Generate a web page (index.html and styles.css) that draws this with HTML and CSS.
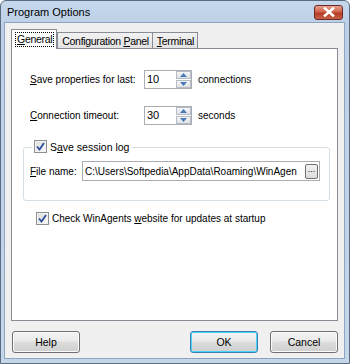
FILE: index.html
```html
<!DOCTYPE html>
<html>
<head>
<meta charset="utf-8">
<link rel="stylesheet" href="styles.css">
</head>
<body>
<div class="window">
  <div class="titlebar">
    <span class="title">Program Options</span>
    <span class="close"><svg width="14" height="10" viewBox="0 0 14 10"><path d="M3 1.5 L11 8.5 M11 1.5 L3 8.5" stroke="#fff" stroke-width="2.6" stroke-linecap="square"/><path d="M3 1.5 L11 8.5 M11 1.5 L3 8.5" stroke="#fff" stroke-width="1.6"/></svg></span>
  </div>
  <div class="client">
    <div class="tabs">
      <div class="tab active"><span class="focus"><u>G</u>eneral</span></div>
      <div class="tab">Configuration <u>P</u>anel</div>
      <div class="tab"><u>T</u>erminal</div>
    </div>
    <div class="panel">
      <div class="row r1">
        <span class="lbl"><u>S</u>ave properties for last:</span>
        <span class="spin"><span class="val">10</span><span class="arrows"><span class="ab"><svg width="7" height="4" viewBox="0 0 7 4"><path d="M0 4 L3.5 0 L7 4Z" fill="#4a7ab8"/></svg></span><span class="ab"><svg width="7" height="4" viewBox="0 0 7 4"><path d="M0 0 L3.5 4 L7 0Z" fill="#4a7ab8"/></svg></span></span></span>
        <span class="unit">connections</span>
      </div>
      <div class="row r2">
        <span class="lbl"><u>C</u>onnection timeout:</span>
        <span class="spin"><span class="val">30</span><span class="arrows"><span class="ab"><svg width="7" height="4" viewBox="0 0 7 4"><path d="M0 4 L3.5 0 L7 4Z" fill="#4a7ab8"/></svg></span><span class="ab"><svg width="7" height="4" viewBox="0 0 7 4"><path d="M0 0 L3.5 4 L7 0Z" fill="#4a7ab8"/></svg></span></span></span>
        <span class="unit">seconds</span>
      </div>
      <div class="group">
        <div class="legend">
          <span class="cb"><svg width="9" height="9" viewBox="0 0 9 9"><path d="M1 4.5 L3.5 7.5 L8 1" fill="none" stroke="#2c4d9e" stroke-width="1.8"/></svg></span>
          <span>S<u>a</u>ve session log</span>
        </div>
        <div class="filerow">
          <span class="lbl2"><u>F</u>ile name:</span>
          <span class="file"><span class="path">C:\Users\Softpedia\AppData\Roaming\WinAgen</span><span class="browse">...</span></span>
        </div>
      </div>
      <div class="check2">
        <span class="cb"><svg width="9" height="9" viewBox="0 0 9 9"><path d="M1 4.5 L3.5 7.5 L8 1" fill="none" stroke="#2c4d9e" stroke-width="1.8"/></svg></span>
        <span>Check WinAgents <u>w</u>ebsite for updates at startup</span>
      </div>
    </div>
    <div class="buttons">
      <button class="btn">Help</button>
      <span class="spacer"></span>
      <button class="btn ok">OK</button>
      <button class="btn">Cancel</button>
    </div>
  </div>
</div>
</body>
</html>
```
FILE: styles.css
```css
html, body {
  margin: 0;
  padding: 0;
  background: #fff;
}
body {
  font-family: "Liberation Sans", Arial, sans-serif;
  font-size: 10px;
  color: #000;
}
.window {
  width: 350px;
  height: 364px;
  box-sizing: border-box;
  border: 1px solid #5b6b80;
  border-radius: 6px 6px 0 0;
  background: linear-gradient(#c5d7eb, #bcd0e7 25px, #c4d6ea);
  display: flex;
  flex-direction: column;
  padding: 0 4px 4px 3px;
}
.titlebar {
  height: 21px;
  display: flex;
  align-items: center;
  justify-content: space-between;
  flex: none;
}
.title {
  font-size: 11px;
  padding-left: 3px;
  padding-top: 1px;
  color: #000;
}
.close {
  width: 29px;
  height: 15px;
  box-sizing: border-box;
  border: 1px solid #6d2a24;
  border-radius: 3px;
  background: linear-gradient(#e6a18c, #d0624a 45%, #b53c25 55%, #c8604a);
  display: flex;
  align-items: center;
  justify-content: center;
  margin-right: 2px;
  margin-top: 1px;
}
.client {
  flex: 1;
  background: #f0f0f0;
  border: 1px solid #8ea4bf;
  padding: 6px 6px 0 6px;
  display: flex;
  flex-direction: column;
}
.tabs {
  display: flex;
  align-items: flex-end;
  height: 19px;
  position: relative;
  z-index: 1;
}
.tab {
  height: 16px;
  box-sizing: border-box;
  border: 1px solid #898c95;
  border-bottom: none;
  background: linear-gradient(#f2f2f2, #e3e3e3);
  padding: 2px 3px 0 4px;
  margin-right: -1px;
  white-space: nowrap;
  font-size: 10.5px;
  letter-spacing: -0.3px;
}
.tab.active {
  background: #fff;
  padding: 2px 2px 0 3px;
  margin-right: 0;
  margin-bottom: -1px;
  height: 20px;
}
.focus {
  border: 1px dotted #000;
  padding: 0 1px;
  display: inline-block;
  line-height: 13px;
}
.panel {
  height: 273px;
  box-sizing: border-box;
  border: 1px solid #898c95;
  background: #fff;
  padding: 21px 0 0 18px;
}
.row {
  display: flex;
  align-items: center;
  height: 19px;
}
.r2 {
  margin-top: 17px;
}
.lbl {
  width: 114px;
  flex: none;
}
.spin {
  display: flex;
  height: 19px;
  width: 48px;
  box-sizing: border-box;
  border: 1px solid #abadb3;
  background: #fff;
}
.val {
  flex: 1;
  padding: 2px 0 0 2px;
  font-size: 11px;
}
.arrows {
  width: 15px;
  display: flex;
  flex-direction: column;
  gap: 1px;
}
.ab {
  flex: 1;
  box-sizing: border-box;
  border: 1px solid #b6bcc6;
  background: linear-gradient(#f6f6f6, #dfe2e6);
  display: flex;
  align-items: center;
  justify-content: center;
}
.unit {
  margin-left: 6px;
}
.group {
  margin: 22px 0 0 -7px;
  width: 307px;
  height: 54px;
  box-sizing: border-box;
  border: 1px solid #d5dfe5;
  border-radius: 3px;
  position: relative;
  padding: 13px 0 0 6px;
}
.legend {
  position: absolute;
  left: 8px;
  top: -8px;
  background: #fff;
  padding: 0 3px 0 2px;
  display: flex;
  align-items: center;
  gap: 3px;
  font-size: 10.5px;
}
.cb {
  width: 13px;
  height: 13px;
  box-sizing: border-box;
  border: 1px solid #8f8f8f;
  background: linear-gradient(135deg, #dcdcdc, #fafafa);
  box-shadow: inset 0 0 0 1px #f4f4f4;
  display: flex;
  align-items: center;
  justify-content: center;
  flex: none;
}
.filerow {
  display: flex;
  align-items: center;
}
.lbl2 {
  width: 52px;
  flex: none;
}
.file {
  display: flex;
  align-items: center;
  width: 238px;
  height: 20px;
  box-sizing: border-box;
  border: 1px solid #abadb3;
  padding: 0 1px 0 2px;
  background: #fff;
}
.path {
  flex: 1;
  overflow: hidden;
  white-space: nowrap;
  font-size: 10px;
}
.browse {
  width: 13px;
  height: 15px;
  box-sizing: border-box;
  border: 1px solid #707070;
  border-radius: 2px;
  background: linear-gradient(#f2f2f2, #dcdcdc);
  font-size: 9px;
  line-height: 8px;
  text-align: center;
  flex: none;
}
.check2 {
  margin: 11px 0 0 6px;
  display: flex;
  align-items: center;
  gap: 3px;
  font-size: 10px;
}
.buttons {
  display: flex;
  align-items: center;
  padding: 10px 0 0 1px;
}
.spacer {
  flex: 1;
}
.btn {
  width: 68px;
  height: 22px;
  box-sizing: border-box;
  border: 1px solid #707070;
  border-radius: 3px;
  background: linear-gradient(#f2f2f2 0%, #ebebeb 45%, #dddddd 50%, #cfcfcf 100%);
  font-family: "Liberation Sans", Arial, sans-serif;
  font-size: 10.5px;
  color: #000;
  padding: 0;
  margin-left: 12px;
  box-shadow: inset 0 0 0 1px #fbfbfb;
}
.btn:first-child {
  margin-left: 0;
}
.btn.ok {
  border-color: #3c7fb1;
  box-shadow: inset 0 0 0 1px #48d4f8;
}
```
